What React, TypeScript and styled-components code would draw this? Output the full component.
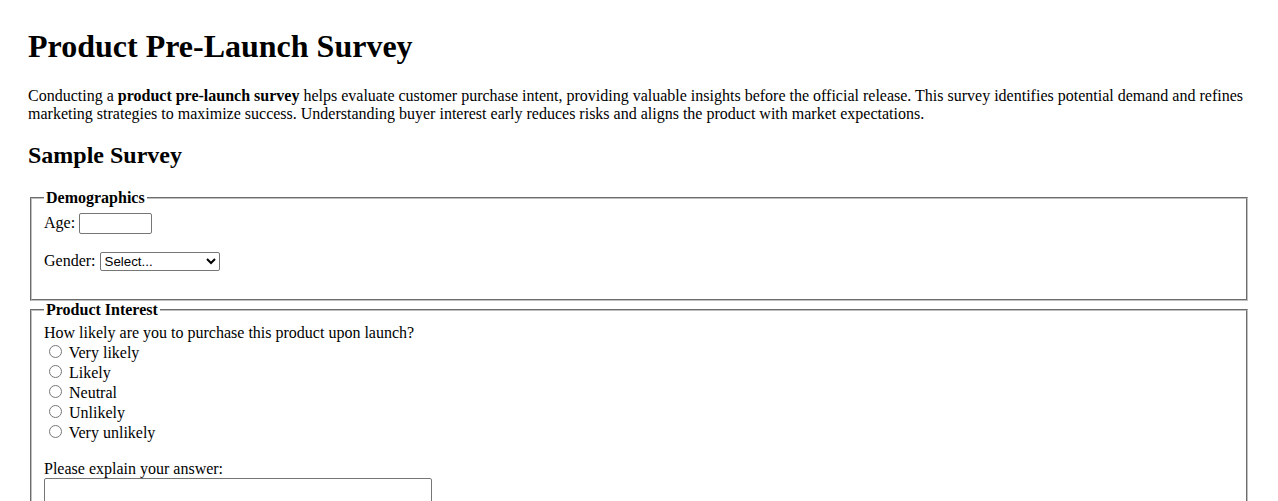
import React from "react";
import styled, { createGlobalStyle } from "styled-components";

const Global = createGlobalStyle`
  html, body {
    margin: 0;
    padding: 0;
    background: #ffffff;
  }
  body {
    font-family: "Liberation Serif", "Times New Roman", serif;
    font-size: 16px;
    color: #000000;
  }
`;

const Page = styled.main`
  padding: 28px 28px 28px 28px;
`;

const Title = styled.h1`
  font-size: 32px;
  font-weight: bold;
  margin: 0 0 22.44px;
`;

const Intro = styled.p`
  margin: 0 0 18.92px;
`;

const Subtitle = styled.h2`
  font-size: 24px;
  font-weight: bold;
  margin: 0 0 19.92px;
`;

const Form = styled.form`
  margin: 0;
`;

const Group = styled.fieldset`
  margin: 0 2px;
  padding: 5.6px 12px 10px;
  border: 2px groove rgb(192, 192, 192);
  min-inline-size: min-content;
`;

const Legend = styled.legend`
  font-weight: bold;
  padding: 0 2px;
`;

const Field = styled.div<{ $gap?: number }>`
  margin-bottom: ${(p) => p.$gap ?? 0}px;
`;

const TextInput = styled.input`
  width: 73px;
  height: 21px;
  box-sizing: border-box;
  border: 1px solid #767676;
  border-radius: 2px;
  padding: 1px 2px;
  font-family: "Liberation Sans", Arial, sans-serif;
  font-size: 13.33px;
  margin-left: 4px;
`;

const Select = styled.select`
  width: 120px;
  height: 19px;
  box-sizing: border-box;
  border: 1px solid #767676;
  border-radius: 2px;
  font-family: "Liberation Sans", Arial, sans-serif;
  font-size: 13.33px;
  color: #000;
  background: #fff;
  margin-left: 4px;
`;

const Question = styled.div`
  line-height: normal;
`;

const Option = styled.label`
  display: block;
  height: 20px;
`;

const Radio = styled.input`
  margin: 3px 3px 0 5px;
  width: 13px;
  height: 13px;
`;

const Area = styled.textarea`
  display: block;
  width: 388px;
  height: 60px;
  box-sizing: border-box;
  border: 1px solid #767676;
  border-radius: 2px;
  font-family: "Liberation Mono", monospace;
  font-size: 13.33px;
  resize: both;
  margin: 0;
`;

export default function App() {
  return (
    <>
      <Global />
      <Page>
        <Title>Product Pre-Launch Survey</Title>
        <Intro>
          Conducting a <strong>product pre-launch survey</strong> helps evaluate customer purchase intent,
          providing valuable insights before the official release. This survey identifies potential demand
          and refines marketing strategies to maximize success. Understanding buyer interest early reduces
          risks and aligns the product with market expectations.
        </Intro>
        <Subtitle>Sample Survey</Subtitle>
        <Form onSubmit={(e) => e.preventDefault()}>
          <Group>
            <Legend>Demographics</Legend>
            <Field $gap={18}>
              <label htmlFor="age">Age:</label>
              <TextInput id="age" type="text" />
            </Field>
            <Field $gap={18}>
              <label htmlFor="gender">Gender:</label>
              <Select id="gender" defaultValue="">
                <option value="">Select...</option>
                <option value="male">Male</option>
                <option value="female">Female</option>
                <option value="other">Other</option>
              </Select>
            </Field>
          </Group>
          <Group>
            <Legend>Product Interest</Legend>
            <Question>How likely are you to purchase this product upon launch?</Question>
            <Field $gap={18}>
              {["Very likely", "Likely", "Neutral", "Unlikely", "Very unlikely"].map((o) => (
                <Option key={o}>
                  <Radio type="radio" name="likelihood" value={o} /> {o}
                </Option>
              ))}
            </Field>
            <Field>
              <label htmlFor="explain">Please explain your answer:</label>
              <Area id="explain" rows={4} />
            </Field>
          </Group>
        </Form>
      </Page>
    </>
  );
}
